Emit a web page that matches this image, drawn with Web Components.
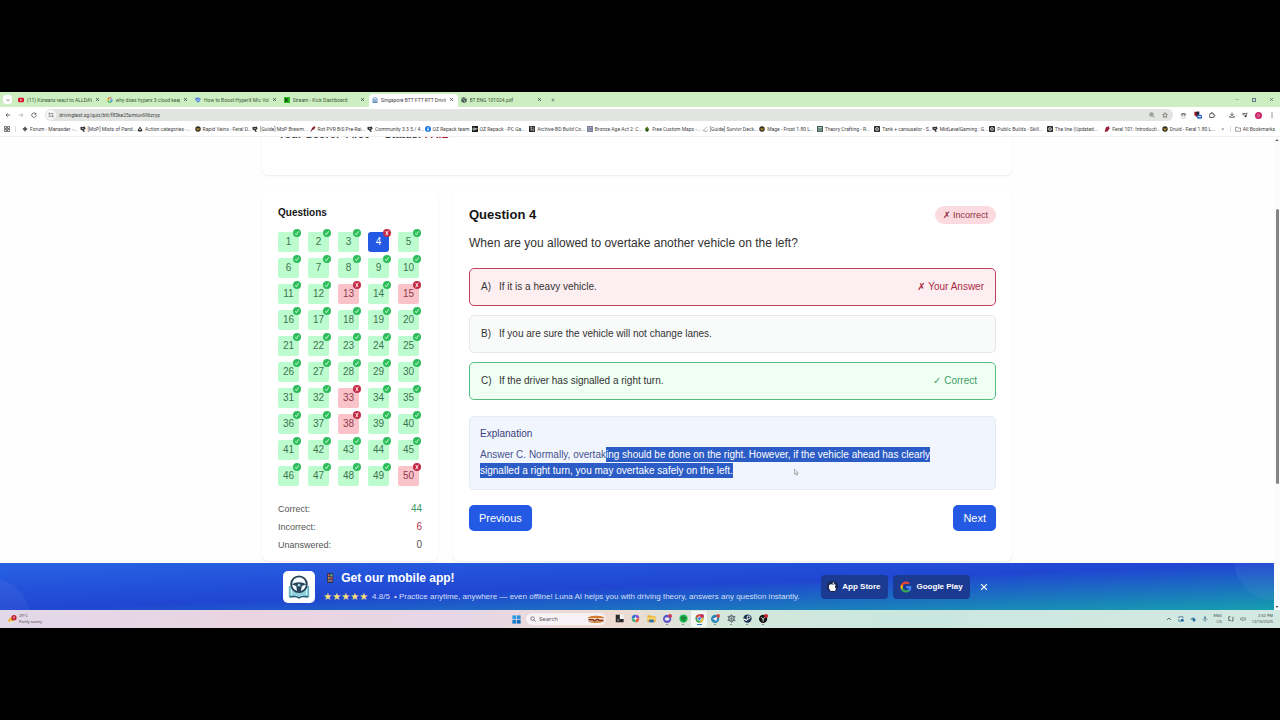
<!DOCTYPE html>
<html lang="en">
<head>
<meta charset="utf-8">
<title>Singapore BTT FTT RTT Driving</title>
<style>
  html { height: 100%; }
  body { margin: 0; min-height: 100vh; box-sizing: border-box; padding: 92px 0; background: #000; display: flex; flex-direction: column; font-family: "Liberation Sans", Arial, sans-serif; }
</style>
</head>
<body>
<desktop-screen></desktop-screen>
<script>
const ICONS = {
  chevdown: '<path d="M7 10l5 5 5-5" fill="none" stroke="#333" stroke-width="3"/>',
  close: '<path d="M5 5l14 14M19 5L5 19" fill="none" stroke="currentColor" stroke-width="3"/>',
  plus: '<path d="M12 3v18M3 12h18" fill="none" stroke="currentColor" stroke-width="3"/>',
  youtube: '<rect x="0" y="3" width="24" height="18" rx="5" fill="#d6162f"/><path d="M9.500 8v8l7-4z" fill="#fff"/>',
  google: '<path fill="#4285F4" d="M22.560 12.250c0-.78-.07-1.530-.2-2.250H12v4.260h5.920a5.060 5.060 0 0 1-2.200 3.320v2.770h3.570c2.080-1.920 3.270-4.740 3.270-8.100z"/><path fill="#34A853" d="M12 23c2.970 0 5.460-.98 7.280-2.660l-3.570-2.770c-.98.66-2.230 1.060-3.710 1.060-2.860 0-5.290-1.930-6.160-4.530H2.180v2.840A11 11 0 0 0 12 23z"/><path fill="#FBBC05" d="M5.840 14.090a6.600 6.600 0 0 1 0-4.180V7.070H2.180a11 11 0 0 0 0 9.860z"/><path fill="#EA4335" d="M12 5.380c1.620 0 3.060.56 4.210 1.640l3.150-3.150C17.450 2.090 14.970 1 12 1A11 11 0 0 0 2.180 7.070l3.660 2.840C6.710 7.310 9.140 5.380 12 5.380z"/>',
  apple: '<circle cx="12" cy="12" r="15" fill="#1b2850"/><path fill="#fff" d="M12.152 6.896c-.948 0-2.415-1.078-3.960-1.040-2.040.027-3.910 1.183-4.961 3.014-2.117 3.675-.546 9.103 1.519 12.090 1.013 1.454 2.208 3.090 3.792 3.039 1.520-.065 2.090-.987 3.935-.987 1.831 0 2.350.987 3.960.948 1.637-.026 2.676-1.480 3.676-2.948 1.156-1.688 1.636-3.325 1.662-3.415-.039-.013-3.182-1.221-3.220-4.857-.026-3.040 2.480-4.494 2.597-4.559-1.429-2.090-3.623-2.324-4.390-2.376-2-.156-3.675 1.090-4.610 1.090zM15.530 3.830c.843-1.012 1.400-2.427 1.245-3.830-1.207.052-2.662.805-3.532 1.818-.78.896-1.454 2.338-1.273 3.714 1.338.104 2.715-.688 3.559-1.701"/>',
  boost: '<path d="M1 3h17l5 4-4 10-8 5L2 12z" fill="#4a7be0"/><path d="M6 8l7 7 5-8" fill="none" stroke="#e9f0ff" stroke-width="3"/>',
  kick: '<rect width="24" height="24" fill="#2fbd22"/><path d="M7 4v16M17 5l-8 7 8 7" fill="none" stroke="#0a2c08" stroke-width="4"/>',
  wheel: '<circle cx="12" cy="11" r="9" fill="none" stroke="#4c8ac0" stroke-width="3"/><path d="M5 11h14M12 11v9M3 17v5h18v-5" fill="none" stroke="#3f74a8" stroke-width="3"/>',
  globe: '<circle cx="12" cy="12" r="11" fill="#3d5347"/><path d="M4 8c5-1 4 4 8 4s2 6 0 8M13 2c0 4 5 3 8 6" fill="none" stroke="#dfeedd" stroke-width="3"/>',
  back: '<path d="M21 12H4M11 5l-7 7 7 7" fill="none" stroke="currentColor" stroke-width="3"/>',
  fwd: '<path d="M3 12h17M13 5l7 7-7 7" fill="none" stroke="currentColor" stroke-width="3"/>',
  reload: '<path d="M19 7a9 9 0 1 0 2 6" fill="none" stroke="currentColor" stroke-width="3"/><path d="M21 2v8h-8z" fill="currentColor"/>',
  tune: '<circle cx="6" cy="7" r="3" fill="none" stroke="#555" stroke-width="2.500"/><circle cx="18" cy="17" r="3" fill="none" stroke="#555" stroke-width="2.500"/><path d="M12 7h10M2 17h10" stroke="#555" stroke-width="3"/>',
  zoom: '<circle cx="10" cy="10" r="7" fill="none" stroke="#666" stroke-width="3"/><path d="M15 15l7 7M7 10h6M10 7v6" stroke="#666" stroke-width="2.500"/>',
  star: '<path d="M12 2.500l3 6.600 7 .8-5.200 4.800 1.400 7.100L12 18.200l-6.200 3.600 1.400-7.100L2 9.900l7-.8z" fill="none" stroke="#555" stroke-width="2.500"/>',
  ghost: '<path d="M2 9c0-8 20-8 20 0z" fill="#6c7a77"/><path d="M5 9v11c4 3 10 3 14 0V9" fill="#eef0ef" stroke="#c5cac8" stroke-width="2"/><path d="M6 11h4M14 11h4" stroke="#555" stroke-width="3"/>',
  shield: '<path d="M1 2h14v10l-6 7-8-7z" fill="#8a1626"/><path d="M8 2h8v9H8z" fill="#1c2333"/><rect x="9" y="11" width="15" height="12" rx="3" fill="#2f67c9"/><path d="M12 17h9" stroke="#e2ebff" stroke-width="3"/>',
  puzzle: '<path d="M3 7h6V4a2.500 2.500 0 0 1 5 0v3h5v5h2a2.500 2.500 0 0 1 0 5h-2v5H3z" fill="none" stroke="#333" stroke-width="3"/>',
  download: '<path d="M12 2v12M6 9l6 6 6-6M3 16v5h18v-5" fill="none" stroke="#333" stroke-width="3"/>',
  music: '<path d="M2 6h12M2 11h8" stroke="#333" stroke-width="3"/><path d="M17 17V5h5" fill="none" stroke="#333" stroke-width="3"/><circle cx="14" cy="17" r="4" fill="#333"/>',
  avatar: '<circle cx="12" cy="12" r="12" fill="#c92366"/><circle cx="12" cy="12" r="4" fill="none" stroke="#f6bdd3" stroke-width="2"/>',
  dots: '<circle cx="12" cy="4" r="2.500" fill="#333"/><circle cx="12" cy="12" r="2.500" fill="#333"/><circle cx="12" cy="20" r="2.500" fill="#333"/>',
  apps: '<path d="M2 2h8v8H2zM14 2h8v8h-8zM2 14h8v8H2zM14 14h8v8h-8z" fill="none" stroke="#444" stroke-width="3"/>',
  flower: '<path d="M12 1l4 6 7 5-7 5-4 6-4-6-7-5 7-5z" fill="#555"/>',
  wolf: '<path d="M2 3l8 1 10-2 2 10-7 4 5 7h-7l-4-6-7-3z" fill="#343434"/><path d="M8 8l8 1-5 4z" fill="#ddd"/>',
  tri: '<path d="M12 2l10 15-4 5H6l-4-5z" fill="#333"/><path d="M12 8l4 8H8z" fill="#eee"/>',
  coin: '<circle cx="12" cy="12" r="11" fill="#332d20"/><path d="M5 8l7 3 7-3-3 9H8z" fill="#b59636"/>',
  feather: '<path d="M2 23L8 8l8-7 6 2-4 9-10 5z" fill="#9a1c2c"/><path d="M2 23L18 5" stroke="#433" stroke-width="2.500"/>',
  fb: '<circle cx="12" cy="12" r="12" fill="#1b78e0"/><path d="M16 6h-2c-2 0-2 1-2 4v12M8 13h8" fill="none" stroke="#fff" stroke-width="3"/>',
  square: '<rect width="24" height="24" fill="#1d1d1d"/><path d="M4 8h7v8H4zM14 8v8M14 12h6V8" fill="none" stroke="#eee" stroke-width="2.500"/>',
  grid: '<rect width="24" height="24" fill="#2c2c2c"/><path d="M4 4h7l-4 9h5v7M15 4l5 6-5 4 5 6" fill="none" stroke="#ddd" stroke-width="2.500"/>',
  pic: '<rect width="24" height="24" fill="#7b7d9a"/><path d="M3 6h18M3 12h14M3 18h18" stroke="#a9abc2" stroke-width="3"/>',
  tree: '<path d="M12 1l6 9h3l-3 11H6L3 10h3z" fill="#4b7a25"/><path d="M9 14h7v8H9z" fill="#274a17"/>',
  sword: '<path d="M3 14l4 7h12l3-6M8 16L19 3" fill="none" stroke="#9a9a9a" stroke-width="3"/>',
  doc: '<rect width="24" height="24" fill="#3f5d50"/><path d="M4 6h16M8 6v16M16 6v16" stroke="#cfe2d9" stroke-width="3"/>',
  ring: '<rect width="24" height="24" rx="3" fill="#2b2b2b"/><circle cx="12" cy="12" r="6" fill="none" stroke="#ddd" stroke-width="3"/><path d="M12 3v18M3 12h18" stroke="#aaa" stroke-width="2"/>',
  red: '<path d="M3 20L8 5l12-4 2 9-8 12-11 1z" fill="#8b1830"/><path d="M5 20L18 5" stroke="#d95570" stroke-width="2"/>',
  folder: '<path d="M2 5h7l3 3h10v13H2z" fill="none" stroke="#666" stroke-width="2.500"/>',
  phone: '<rect x="5" y="0" width="15" height="24" rx="3" fill="#2c3350"/><path d="M7 3h4v5H7z" fill="#e05c5c"/><path d="M13 3h5v5h-5z" fill="#6cb88c"/><path d="M7 10h4v4H7z" fill="#d9a452"/><path d="M13 10h5v4h-5z" fill="#e05c5c"/><path d="M7 16h11v5H7z" fill="#9c6a78"/>',
  applogo: '<path d="M1 12v12c5-1 9-1 11 1 2-2 6-2 11-1V12h-2v10c-4 0-7 0-9 2-2-2-5-2-9-2V12z" fill="#5cb3c6"/><path d="M4 11v11c4-1 6 0 8 2 2-2 4-3 8-2V11z" fill="#8fd0dc"/><path d="M2 24c4-1 8-1 10 1 2-2 6-2 10-1" fill="none" stroke="#235a72" stroke-width="1.500"/><circle cx="12" cy="10" r="8.500" fill="#f4fbfd" stroke="#24425a" stroke-width="2"/><path d="M4 10c5-3 11-3 16 0l-5 2-1 6h-4l-1-6z" fill="#24425a"/><circle cx="12" cy="11" r="1.500" fill="#9fd8e2"/>',
  check: '<circle cx="12" cy="12" r="12" fill="#2dbd5a"/><path d="M7 13l3 4 7-10" fill="none" stroke="#fff" stroke-width="2.500"/>',
  wrong: '<circle cx="12" cy="12" r="12" fill="#c42943"/><path d="M8 6l7 12M16 5L8 19" fill="none" stroke="#fff" stroke-width="2.500"/>',
  win: '<path d="M1 1h10v10H1z" fill="#2c9ce2"/><path d="M13 1h10v10H13z" fill="#2b8fdc"/><path d="M1 13h10v10H1z" fill="#1a7ccd"/><path d="M13 13h10v10H13z" fill="#136bbd"/>',
  mag: '<circle cx="10" cy="10" r="7" fill="none" stroke="#444" stroke-width="2.500"/><path d="M15 15l7 7" stroke="#444" stroke-width="3"/>',
  burger: '<path d="M1 11C4 2 44 2 47 11z" fill="#cf7a2e"/><path d="M1 12h46l-3 4H4z" fill="#f2dfb4"/><path d="M4 15h12l4 3 8-4 5 3h11" fill="none" stroke="#7d2e1b" stroke-width="4"/><path d="M3 19h42c-3 6-39 6-42 0z" fill="#c97e33"/>',
  taskview: '<path d="M2 2h11v11h10v9H2z" fill="#2a2a2a"/><path d="M13 2h10v11H13z" fill="#f5f5f5"/><path d="M6 14h5v5H6z" fill="#777"/>',
  copilot: '<path d="M2 12C2 4 6 1 13 2l-2 9z" fill="#2a6fd8"/><path d="M13 2c6 0 9 4 9 9l-9-1z" fill="#8d49c9"/><path d="M22 11c0 8-5 12-10 11l1-9z" fill="#e0523e"/><path d="M12 22C5 22 2 18 2 12l8 1z" fill="#35b06f"/><circle cx="12" cy="12" r="3" fill="#fff"/>',
  files: '<path d="M1 3h9l3 3h10v16H1z" fill="#e7b53d"/><path d="M1 9h22v6H1z" fill="#f8d565"/><path d="M6 15h12v7H6z" fill="#2a6fb5"/>',
  discord: '<circle cx="11" cy="13" r="11" fill="#5b51c6"/><rect x="5" y="9" width="12" height="8" rx="3" fill="#fff"/><path d="M8 12v2M14 12v2" stroke="#5b51c6" stroke-width="2"/><circle cx="19" cy="5" r="5" fill="#cc3b58"/>',
  spotify: '<circle cx="12" cy="12" r="11" fill="#22c155"/><path d="M5 9c5-2 10-1 14 1M6 13c4-1 8-1 12 1M7 17c4-1 6-1 9 1" fill="none" stroke="#15582e" stroke-width="2.500"/>',
  chrome: '<circle cx="12" cy="12" r="11" fill="#3aa757"/><path d="M2 7A11 11 0 0 1 22 7l-10 1-4 5z" fill="#dd4237"/><path d="M22 7c3 8-2 16-10 16l5-10z" fill="#f3c231"/><circle cx="12" cy="12" r="5" fill="#3f7de8" stroke="#fff" stroke-width="2"/><circle cx="19" cy="5" r="5" fill="#c43060"/>',
  telegram: '<circle cx="11" cy="13" r="11" fill="#2b87b8"/><path d="M4 13l13-6-3 12-4-4z" fill="#fff"/><circle cx="19" cy="5" r="5" fill="#d24a45"/>',
  gear: '<circle cx="12" cy="12" r="7" fill="none" stroke="#5d6973" stroke-width="3"/><circle cx="12" cy="12" r="3" fill="#47525c"/><path d="M12 1v4M12 19v4M2 6l4 3M18 15l4 3M2 18l4-3M18 9l4-3" stroke="#5d6973" stroke-width="3"/>',
  steam: '<circle cx="12" cy="12" r="11" fill="#193252"/><circle cx="15" cy="9" r="4" fill="none" stroke="#fff" stroke-width="2.500"/><path d="M1 13l8 4 4-4" fill="none" stroke="#fff" stroke-width="3"/>',
  obs: '<circle cx="11" cy="13" r="11" fill="#161616"/><path d="M6 9l5 4 5-4M11 13v7" fill="none" stroke="#e9e9e9" stroke-width="2.500"/><circle cx="19" cy="5" r="5" fill="#cf1f2c"/>',
  weather: '<circle cx="8" cy="14" r="7" fill="#edb43c"/><path d="M3 22c0-7 12-7 13 0z" fill="#dbe9f7"/><circle cx="16" cy="7" r="7" fill="#bd1f30"/><path d="M16 3v7" stroke="#fff" stroke-width="2"/>',
  up: '<path d="M4 16l8-8 8 8" fill="none" stroke="#444" stroke-width="3"/>',
  tray1: '<path d="M3 8V3h17v6M3 12v9h8" fill="none" stroke="#3d6f8c" stroke-width="3"/><circle cx="17" cy="17" r="6" fill="#1d6aa8"/>',
  tray2: '<path d="M2 16c0-10 14-14 19-6z" fill="#4d87a5"/><circle cx="16" cy="16" r="6" fill="#1f669b"/>',
  mic: '<rect x="8" y="1" width="8" height="13" rx="4" fill="#5d88a0"/><path d="M4 11c0 9 16 9 16 0M12 18v5" fill="none" stroke="#48687a" stroke-width="2.500"/>',
  net: '<path d="M10 3H3v15h8M14 20h6V3" fill="none" stroke="#444" stroke-width="3"/>',
  vol: '<path d="M2 9h4l6-5v16l-6-5H2z" fill="none" stroke="#555" stroke-width="2"/><path d="M16 7c3 3 3 7 0 10M20 4c4 5 4 11 0 16" fill="none" stroke="#666" stroke-width="2"/>',
  pointer: '<path d="M5 1v17l4-4 3 8 4-2-4-7h6z" fill="#fff" stroke="#777" stroke-width="2"/>',
  arrowup: '<path d="M12 6l9 12H3z" fill="#555"/>',
  arrowdown: '<path d="M12 18L3 6h18z" fill="#555"/>'
};

function define(name, css, html, setup) {
  const tpl = document.createElement('template');
  customElements.define(name, class extends HTMLElement {
    connectedCallback() {
      if (this.shadowRoot) return;
      const root = this.attachShadow({ mode: 'open' });
      tpl.innerHTML = '<style>*{box-sizing:border-box}button,input{font:inherit;color:inherit;border:0;padding:0;margin:0;background:none;outline:0}a{color:inherit;text-decoration:none}' + css + '</style>' + (typeof html === 'function' ? html(this) : html);
      root.append(tpl.content.cloneNode(true));
      if (setup) setup(root, this);
    }
  });
}

define('x-icon', ':host{display:block;flex:none;width:var(--s,6px);height:var(--s,6px)}svg{display:block;width:100%;height:100%;overflow:visible}',
  el => `<svg viewBox="${el.getAttribute('box') || '0 0 24 24'}" aria-hidden="true">${ICONS[el.getAttribute('name')]}</svg>`);

/* Browser chrome */
define('browser-tab', `
  :host{display:flex;flex:1 1 0;min-width:0;align-items:center;gap:3px;padding:0 4px 2px 3px;color:#3f5a3b;border-radius:4px 4px 0 0}
  :host([active]){background:#fff;color:#444}
  .t{flex:1;min-width:0;overflow:hidden;white-space:nowrap;line-height:8px}
  button{display:block;color:#223}`,
  el => `<x-icon name="${el.getAttribute('icon')}"></x-icon><span class="t"><slot></slot></span><button aria-label="Close tab"><x-icon name="close" style="--s:5px"></x-icon></button>`);

define('tab-strip', `
  :host{display:flex;height:15px;background:#cdeec1;padding:2px 0 0 3px;font:5px/8px Roboto,sans-serif}
  .menu{width:9px;height:9px;margin:1px 3px 0 0;background:#fff;border-radius:3px;display:grid;place-items:center}
  .tabs{display:flex;flex:0 1 531px;min-width:0}
  .add{margin:0 0 2px 5px;color:#244}
  .win{margin-left:auto;display:flex;align-items:center;gap:13px;padding:0 6px 2px 0;color:#456}
  .max{width:4px;height:4px;border:1px solid #678}
  .min{width:4px;height:1px;background:#a5c49c}`,
  `<button class="menu" aria-label="Search tabs"><x-icon name="chevdown" style="--s:6px"></x-icon></button>
  <div class="tabs">
    <browser-tab icon="youtube">(11) Koreans react to ALLDAY P</browser-tab>
    <browser-tab icon="google">why does hyperx 3 cloud keep</browser-tab>
    <browser-tab icon="boost">How to Boost HyperX Mic Volu</browser-tab>
    <browser-tab icon="kick">Stream - Kick Dashboard</browser-tab>
    <browser-tab icon="wheel" active>Singapore BTT FTT RTT Driving</browser-tab>
    <browser-tab icon="globe">BT ENG 101024.pdf</browser-tab>
  </div>
  <button class="add" aria-label="New tab"><x-icon name="plus" style="--s:4px"></x-icon></button>
  <div class="win"><button class="min" aria-label="Minimise"></button><button class="max" aria-label="Restore"></button><button aria-label="Close"><x-icon name="close" style="--s:5px"></x-icon></button></div>`);

define('address-bar', `
  :host{display:flex;align-items:center;height:16px;background:#fff;padding:0 5px;font:5px/8px Roboto,sans-serif;color:#444}
  nav{display:flex;gap:7px;width:40px}
  .fwd{color:#aaa}
  .pill{flex:1;display:flex;align-items:center;gap:3px;height:12px;border-radius:6px;background:#e2e4e1;padding:0 5px 0 1px}
  .site{width:10px;height:10px;border-radius:5px;background:#f6f7f6;display:grid;place-items:center}
  input{flex:1;min-width:0;color:#444}
  .end{display:flex;gap:7px}
  .ext{display:flex;align-items:center;gap:7px;padding-left:7px}`,
  `<nav><button aria-label="Back"><x-icon name="back"></x-icon></button><button class="fwd" aria-label="Forward"><x-icon name="fwd"></x-icon></button><button aria-label="Reload"><x-icon name="reload"></x-icon></button></nav>
  <div class="pill"><span class="site"><x-icon name="tune"></x-icon></span><input aria-label="Address" value="drivingtest.sg/quiz/btt/f83ke25smiuv696zryp"><span class="end"><x-icon name="zoom"></x-icon><x-icon name="star"></x-icon></span></div>
  <div class="ext"><x-icon name="ghost" style="--s:7px"></x-icon><x-icon name="shield" style="--s:8px"></x-icon><x-icon name="puzzle"></x-icon><span></span><x-icon name="download"></x-icon><x-icon name="music"></x-icon><x-icon name="avatar" style="--s:7px"></x-icon><x-icon name="dots"></x-icon></div>`);

define('bookmark-link', `
  :host{display:block;flex:1 1 0;min-width:0}
  :host([short]){flex:0 0 47px}
  a{display:flex;align-items:center;gap:2px;white-space:nowrap}`,
  el => `<a href="#"><x-icon name="${el.getAttribute('icon')}"></x-icon><span><slot></slot></span></a>`);

const MARKS = [
  ['flower', 'Forum - Manaxder -...'], ['wolf', '[MoP] Mists of Pand...'], ['tri', 'Action categories -...'], ['coin', 'Rapid Veins - Feral D...'],
  ['wolf', '[Guide] MoP Brewm...'], ['feather', 'Rot PVR BiS Pre-Rai...'], ['wolf', 'Community 3.3.5 / 4...'], ['fb', 'OZ Repack team', 1],
  ['square', 'OZ Repack - PC Ga...'], ['grid', 'Archive-BD Build Co...'], ['pic', 'Bronze Age Act 2: C...'], ['tree', 'Free Custom Maps -...'],
  ['sword', '[Guide] Survivr Deck...'], ['coin', 'Mage - Frost 1.80 L...'], ['doc', 'Theory Crafting - R...'], ['ring', 'Tank + carouselor - S...'],
  ['wolf', 'MidLevelGaming : G...'], ['ring', 'Public Builds - Skill...'], ['ring', 'The line (Updated...'], ['red', 'Feral 101: Introducti...'], ['coin', 'Druid - Feral 1.80 L...']
];
define('bookmark-bar', `
  :host{display:flex;align-items:center;height:14px;padding:0 5px 1px 4px;background:#fff;border-bottom:1px solid #f0f0f0;font:5px/6px Roboto,sans-serif;color:#444}
  .list{flex:1;min-width:0;display:flex;padding-left:6px}
  .sep{width:1px;height:6px;background:#ddd}
  .apps{padding-right:5px}
  .more{padding:0 6px 0 2px}
  .all{display:flex;gap:2px;align-items:center;padding-left:4px}`,
  `<a class="apps" href="#" aria-label="Apps"><x-icon name="apps"></x-icon></a><span class="sep"></span>
  <div class="list">${MARKS.map(m => `<bookmark-link icon="${m[0]}"${m[2] ? ' short' : ''}>${m[1]}</bookmark-link>`).join('')}</div>
  <span class="more">»</span><span class="sep"></span><a class="all" href="#"><x-icon name="folder"></x-icon>All Bookmarks</a>`);

/* Quiz page */
define('white-card', ':host{display:block;background:#fff;border-radius:6px;box-shadow:0 1px 2px #00000012,0 0 1px #0000000c;padding:16px}', '<slot></slot>');

define('question-cell', `
  :host{display:block}
  button{position:relative;display:block;width:21px;height:20px;border-radius:2px;background:#bdfccf;color:#3d7450;font-size:10px;line-height:20px;text-align:center}
  :host([wrong]) button{background:#f9c3c9;color:#8f3a4a}
  :host([current]) button{background:#2459e3;color:#fff;border-radius:3px}
  x-icon{position:absolute;top:-3px;right:-2px;--s:8px}`,
  el => `<button><slot></slot><x-icon name="${el.hasAttribute('wrong') ? 'wrong' : 'check'}"></x-icon></button>`);

const WRONG = [4, 13, 15, 33, 38, 50];
define('question-nav', `
  :host{display:block}
  h2{margin:0 0 12px;font-size:10px;line-height:14px;color:#161616}
  .grid{display:grid;grid-template-columns:repeat(5,1fr);gap:6px}
  dl{margin:17px 0 0;display:grid;grid-template-columns:1fr auto;row-gap:6px;font-size:9px;line-height:12px;color:#555}
  dd{margin:0;text-align:right;font-size:10px}
  .ok{color:#3b9a63}.bad{color:#b3344c}`,
  `<h2>Questions</h2><div class="grid">${Array.from({ length: 50 }, (_, i) => `<question-cell${WRONG.includes(i + 1) ? ' wrong' : ''}${i === 3 ? ' current' : ''}>${i + 1}</question-cell>`).join('')}</div>
  <dl><dt>Correct:</dt><dd class="ok">44</dd><dt>Incorrect:</dt><dd class="bad">6</dd><dt>Unanswered:</dt><dd>0</dd></dl>`);

define('answer-option', `
  :host{display:flex;align-items:center;height:38px;padding:0 11px;border:1px solid #e6e9ea;border-radius:5px;background:#f9fafa;color:#333;font-size:10px;line-height:16px}
  :host([state=wrong]){background:#fdeff1;border-color:#c2405f}
  :host([state=right]){background:#f0fff4;border-color:#55bd80}
  .k{width:18px}
  ::slotted([slot=mark]){margin-left:auto}`,
  el => `<span class="k">${el.getAttribute('key')})</span><span><slot></slot></span><slot name="mark"></slot>`);

define('primary-button', ':host{display:block}button{height:26px;padding:0 10px;border-radius:5px;background:#2459e3;color:#fff;font-size:11px;line-height:16px}', '<button><slot></slot></button>');

define('question-view', `
  :host{display:flex;flex-direction:column}
  header{display:flex;justify-content:space-between;align-items:center;height:18px;margin-bottom:10px}
  h1{margin:0;font-size:13px;line-height:18px;color:#151515}
  .tag{height:18px;padding:0 8px;border-radius:9px;background:#fbdbdf;color:#8e2f42;font-size:9px;line-height:18px}
  .ask{margin:0 0 16px;font-size:12px;line-height:18px;color:#303030}
  .opts{display:flex;flex-direction:column;gap:9px;margin-bottom:16px}
  .no{color:#ab2b46}.yes{color:#3f9d65;padding-right:7px}
  .glyph{font-family:"DejaVu Sans",sans-serif}
  .why{position:relative;padding:10px;border:1px solid #e6eaf6;border-radius:5px;background:#f1f5fe;color:#46528c;font-size:10px;margin-bottom:15px}
  .why h3{margin:0 0 6px;font-size:10px;line-height:14px;font-weight:400;color:#38407c}
  .why p{margin:0;line-height:16px;max-width:480px}
  mark{background:#2c5cc5;color:#fff;padding:2px 0}
  .why x-icon{position:absolute;left:323px;top:52px}
  footer{display:flex;justify-content:space-between}`,
  `<header><h1>Question 4</h1><span class="tag"><span class="glyph">✗</span> Incorrect</span></header>
  <p class="ask">When are you allowed to overtake another vehicle on the left?</p>
  <div class="opts">
    <answer-option key="A" state="wrong">If it is a heavy vehicle.<span slot="mark" class="no"><span class="glyph">✗</span> Your Answer</span></answer-option>
    <answer-option key="B">If you are sure the vehicle will not change lanes.</answer-option>
    <answer-option key="C" state="right">If the driver has signalled a right turn.<span slot="mark" class="yes"><span class="glyph">✓</span> Correct</span></answer-option>
  </div>
  <section class="why"><h3>Explanation</h3><p>Answer C. Normally, overtak<mark>ing should be done on the right. However, if the vehicle ahead has clearly signalled a right turn, you may overtake safely on the left.</mark></p><x-icon name="pointer" style="--s:7px"></x-icon></section>
  <footer><primary-button>Previous</primary-button><primary-button>Next</primary-button></footer>`);

define('quiz-page', `
  :host{display:block;flex:1 1 0;min-height:0;overflow:hidden;background:#fefefe}
  main{max-width:750px;margin:0 auto;padding-bottom:24px;display:grid;gap:15px}
  .head{height:36px;padding-top:5px;font-size:11px;line-height:12px;font-weight:700;color:#444;display:flex;gap:14px}
  .head b{color:#a01830}
  .cols{display:grid;grid-template-columns:176px minmax(0,1fr);gap:15px}
  .side,.main{padding-bottom:10px}`,
  `<main><white-card><div class="head"><span>Your Score: 44/50</span><span>Status: <b>FAIL</b></span></div></white-card>
  <div class="cols"><white-card class="side"><question-nav></question-nav></white-card><white-card class="main"><question-view></question-view></white-card></div></main>`,
  (root, el) => { requestAnimationFrame(() => { el.scrollTop = 30; }); el.scrollTop = 30; });

define('store-button', ':host{display:block}a{display:flex;align-items:center;gap:5px;height:24px;padding:0 7px;border-radius:4px;background:#1b3b92;color:#fff;font-size:8px;line-height:12px;font-weight:700}',
  el => `<a href="#"><x-icon name="${el.getAttribute('icon')}" style="--s:${el.getAttribute('size')}"></x-icon><slot></slot></a>`);

define('app-banner', `
  :host{display:flex;align-items:center;justify-content:center;position:relative;overflow:hidden;height:47px;background:linear-gradient(to bottom right,#2762e4,#2046d2 50%,#169fae);color:#fff}
  .c{position:absolute;border-radius:50%;background:#ffffff0c;width:80px;height:80px}
  .l{left:-50px;top:15px}.r{right:-40px;top:-43px}
  .logo{width:32px;height:32px;border-radius:5px;background:#fff;display:grid;place-items:center;margin-right:8px}
  .txt{width:498px}
  h2{margin:0 0 5px;font-size:12px;line-height:16px;display:flex;align-items:center;gap:6px;padding-left:2px}
  p{margin:0;font-size:8px;line-height:12px;display:flex;gap:4px;color:#d5def8;white-space:nowrap}
  .stars{color:#fbe07a;display:flex;font-family:"DejaVu Sans",sans-serif;font-size:10px}
  .stores{display:flex;gap:5px;align-items:center}
  .x{margin-left:2px;padding:2px;display:block}`,
  `<span class="c l"></span><span class="c r"></span>
  <span class="logo"><x-icon name="applogo" box="0 0 24 26" style="--s:24px"></x-icon></span>
  <div class="txt"><h2><x-icon name="phone" style="--s:10px"></x-icon>Get our mobile app!</h2>
  <p><span class="stars">★★★★★</span><span>4.8/5</span><span>• Practice anytime, anywhere — even offline! Luna AI helps you with driving theory, answers any question instantly.</span></p></div>
  <div class="stores"><store-button icon="apple" size="9px">App Store</store-button><store-button icon="google" size="12px">Google Play</store-button><button class="x" aria-label="Dismiss"><x-icon name="close" style="--s:10px"></x-icon></button></div>`);

define('scroll-rail', `
  :host{display:flex;flex-direction:column;align-items:center;width:6px;background:#fcfcfc;padding:1px 0}
  .track{flex:1;display:flex;flex-direction:column;align-self:stretch;align-items:center}
  .track::before{content:"";flex:67 1 0}.track::after{content:"";flex:121 1 0}
  i{flex:274 1 0;width:3px;border-radius:2px;background:#858585}`,
  '<x-icon name="arrowup" style="--s:4px"></x-icon><div class="track"><i></i></div><x-icon name="arrowdown" style="--s:4px"></x-icon>');

/* Taskbar */
define('task-bar', `
  :host{display:grid;grid-template-columns:1fr auto 1fr;align-items:center;height:18px;background:linear-gradient(90deg,#e2d8e9,#ead4e1 20%,#e6d6e6 36%,#eedbd2 48%,#d5e7dc 56%,#c9e7df 70%,#d3e9e2);font:4px/6px "Noto Sans",sans-serif;color:#444}
  .w{display:flex;align-items:center;gap:2px;padding-left:8px}
  .mid{display:flex;align-items:center;gap:4px;padding-left:3px}
  .search{display:flex;align-items:center;gap:3px;width:80px;height:12px;border-radius:6px;background:#f8f1f5;padding:0 1px 0 4px;margin:0 1px}
  input{flex:1;min-width:0;font:6px/8px "Noto Sans",sans-serif}
  input::placeholder{color:#555}
  .b{width:18px;height:10px}
  .apps{display:flex}
  .apps button{width:16px;height:16px;border-radius:2px;display:flex;flex-direction:column;align-items:center;justify-content:center;gap:1px}
  .apps button::after{content:"";width:2px;height:1px;background:#8a928f}
  .apps .plain::after{background:none}
  .apps .on{background:#ffffffb0}
  .apps .on::after{width:5px;background:#2a7fc9}
  .r{display:flex;justify-content:flex-end;align-items:center;gap:6px;padding-right:7px;text-align:right}`,
  `<div class="w"><x-icon name="weather" style="--s:9px"></x-icon><span>29°C<br>Partly sunny</span></div>
  <div class="mid"><button aria-label="Start"><x-icon name="win" style="--s:9px"></x-icon></button>
    <label class="search"><x-icon name="mag"></x-icon><input aria-label="Search" placeholder="Search"><x-icon class="b" name="burger" box="0 0 48 26"></x-icon></label>
    <div class="apps">${[['taskview', 'plain'], ['copilot', 'plain'], ['files', 'plain'], ['discord', ''], ['spotify', ''], ['chrome', 'on'], ['telegram', ''], ['gear', ''], ['steam', ''], ['obs', '']].map(a => `<button class="${a[1]}" aria-label="${a[0]}"><x-icon name="${a[0]}" style="--s:9px"></x-icon></button>`).join('')}</div></div>
  <div class="r"><x-icon name="up"></x-icon><x-icon name="tray1"></x-icon><x-icon name="tray2"></x-icon><x-icon name="mic"></x-icon><span>ENG<br>US</span><x-icon name="net"></x-icon><x-icon name="vol"></x-icon><span>2:32 PM<br>12/10/2025</span></div>`);

define('desktop-screen', `
  :host{display:flex;flex-direction:column;flex:1 1 0;min-height:0}
  .view{display:flex;flex:1 1 0;min-height:0;background:#fff}
  .col{display:flex;flex-direction:column;flex:1;min-width:0}`,
  `<tab-strip></tab-strip><address-bar></address-bar><bookmark-bar></bookmark-bar>
  <div class="view"><div class="col"><quiz-page></quiz-page><app-banner></app-banner></div><scroll-rail></scroll-rail></div>
  <task-bar></task-bar>`);
</script>
</body>
</html>
